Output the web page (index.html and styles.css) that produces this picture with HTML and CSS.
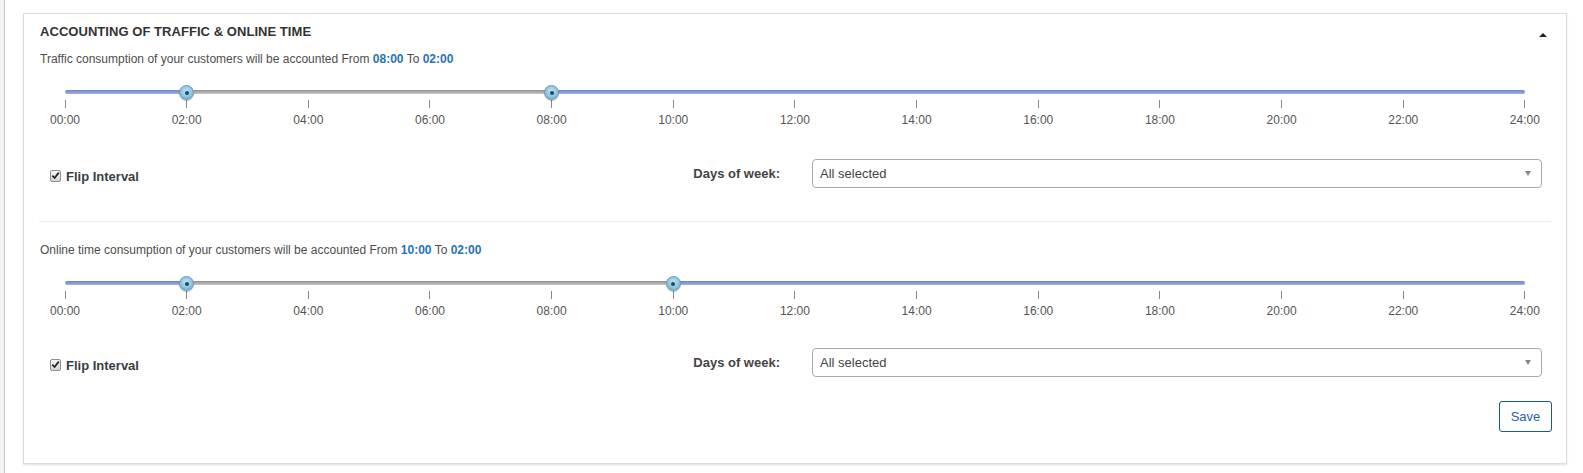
FILE: index.html
```html
<!DOCTYPE html>
<html>
<head>
<meta charset="utf-8">
<link rel="stylesheet" href="styles.css">
</head>
<body>
<div class="page">
  <div class="edge"></div>
  <div class="content">
    <div class="panel">
      <div class="panel-head">
        <h2 class="panel-title">ACCOUNTING OF TRAFFIC &amp; ONLINE TIME</h2>
        <span class="caret"></span>
      </div>

      <section class="block">
        <p class="desc">Traffic consumption of your customers will be accounted From <b>08:00</b> To <b>02:00</b></p>
        <div class="slider">
          <div class="track">
            <div class="seg on" style="flex-basis:8.3333%"></div>
            <div class="seg off" style="flex-basis:25%"></div>
            <div class="seg on" style="flex-basis:66.6667%"></div>
            <span class="handle" style="left:8.3333%"></span>
            <span class="handle" style="left:33.3333%"></span>
          </div>
          <div class="ticks">
            <div class="tick"><i></i><span>00:00</span></div>
            <div class="tick"><i></i><span>02:00</span></div>
            <div class="tick"><i></i><span>04:00</span></div>
            <div class="tick"><i></i><span>06:00</span></div>
            <div class="tick"><i></i><span>08:00</span></div>
            <div class="tick"><i></i><span>10:00</span></div>
            <div class="tick"><i></i><span>12:00</span></div>
            <div class="tick"><i></i><span>14:00</span></div>
            <div class="tick"><i></i><span>16:00</span></div>
            <div class="tick"><i></i><span>18:00</span></div>
            <div class="tick"><i></i><span>20:00</span></div>
            <div class="tick"><i></i><span>22:00</span></div>
            <div class="tick"><i></i><span>24:00</span></div>
          </div>
        </div>
        <div class="opts">
          <label class="flip"><span class="cb"><svg viewBox="0 0 10 10" width="9" height="9"><path d="M1.5 5.2 L4 7.8 L8.6 1.8" fill="none" stroke="#222" stroke-width="1.9"/></svg></span>Flip Interval</label>
          <span class="days-label">Days of week:</span>
          <div class="select"><span>All selected</span><span class="arrow"></span></div>
        </div>
      </section>

      <hr class="divider">

      <section class="block second">
        <p class="desc">Online time consumption of your customers will be accounted From <b>10:00</b> To <b>02:00</b></p>
        <div class="slider">
          <div class="track">
            <div class="seg on" style="flex-basis:8.3333%"></div>
            <div class="seg off" style="flex-basis:33.3333%"></div>
            <div class="seg on" style="flex-basis:58.3333%"></div>
            <span class="handle" style="left:8.3333%"></span>
            <span class="handle" style="left:41.6667%"></span>
          </div>
          <div class="ticks">
            <div class="tick"><i></i><span>00:00</span></div>
            <div class="tick"><i></i><span>02:00</span></div>
            <div class="tick"><i></i><span>04:00</span></div>
            <div class="tick"><i></i><span>06:00</span></div>
            <div class="tick"><i></i><span>08:00</span></div>
            <div class="tick"><i></i><span>10:00</span></div>
            <div class="tick"><i></i><span>12:00</span></div>
            <div class="tick"><i></i><span>14:00</span></div>
            <div class="tick"><i></i><span>16:00</span></div>
            <div class="tick"><i></i><span>18:00</span></div>
            <div class="tick"><i></i><span>20:00</span></div>
            <div class="tick"><i></i><span>22:00</span></div>
            <div class="tick"><i></i><span>24:00</span></div>
          </div>
        </div>
        <div class="opts">
          <label class="flip"><span class="cb"><svg viewBox="0 0 10 10" width="9" height="9"><path d="M1.5 5.2 L4 7.8 L8.6 1.8" fill="none" stroke="#222" stroke-width="1.9"/></svg></span>Flip Interval</label>
          <span class="days-label">Days of week:</span>
          <div class="select"><span>All selected</span><span class="arrow"></span></div>
        </div>
      </section>

      <div class="actions">
        <button class="btn-save" type="button">Save</button>
      </div>
    </div>
  </div>
</div>
</body>
</html>
```

FILE: styles.css
```css
* { box-sizing: border-box; }
html, body { margin: 0; padding: 0; background: #fff; }
body {
  font-family: "Liberation Sans", Arial, sans-serif;
  color: #333;
  width: 1583px;
  height: 473px;
  overflow: hidden;
}
.page { display: flex; height: 473px; }
.edge {
  width: 5px;
  flex: none;
  background: #f3f3f3;
  border-right: 1px solid #c9c9c9;
}
.content {
  flex: 1;
  padding: 13px 16px 0 18px;
}
.panel {
  border: 1px solid #dcdcdc;
  box-shadow: 0 1px 2px rgba(0, 0, 0, 0.12);
  padding: 9px 15px 31px 16px;
  background: #fff;
}
.panel-head {
  display: flex;
  justify-content: space-between;
  align-items: center;
  height: 18px;
}
.panel-title {
  margin: 0;
  font-size: 13px;
  font-weight: bold;
  line-height: 18px;
  color: #333;
  letter-spacing: 0.05px;
}
.caret {
  width: 0;
  height: 0;
  border-left: 4px solid transparent;
  border-right: 4px solid transparent;
  border-bottom: 4px solid #222;
  margin: 5px 4px 0 0;
}
.block { padding: 0; }
.desc {
  margin: 10px 0 0;
  font-size: 12px;
  line-height: 17px;
  color: #4d4d4d;
}
.desc b { color: #1f73bd; }
.slider {
  margin: 22px 26px 0 25px;
}
.track {
  position: relative;
  display: flex;
  height: 4px;
  border-radius: 2px;
}
.seg { height: 4px; }
.seg.on {
  background: linear-gradient(#6d84c8, #9fb1e4);
}
.seg.off {
  background: linear-gradient(#8f8f8f, #c9c9c9);
}
.track .seg:first-child { border-radius: 2px 0 0 2px; }
.track .seg:nth-child(3) { border-radius: 0 2px 2px 0; }
.handle {
  position: absolute;
  top: 50%;
  width: 15px;
  height: 15px;
  margin: -7px 0 0 -7.5px;
  border-radius: 50%;
  border: 1px solid #6b9ab4;
  background: radial-gradient(circle at 50% 40%, #c2e4f3 0%, #8cc4e0 55%, #5d9fc2 100%);
  box-shadow: 0 1px 1px rgba(0, 0, 0, 0.25);
}
.handle::after {
  content: "";
  position: absolute;
  left: 4.5px;
  top: 4.5px;
  width: 4px;
  height: 4px;
  border-radius: 50%;
  background: #1b4a66;
}
.ticks {
  display: flex;
  justify-content: space-between;
  margin-top: 6px;
}
.tick {
  width: 0;
  display: flex;
  flex-direction: column;
  align-items: center;
}
.tick i {
  display: block;
  width: 1px;
  height: 8px;
  background: #8a8a8a;
  flex: none;
}
.tick span {
  display: block;
  margin-top: 5px;
  font-size: 12px;
  line-height: 14px;
  color: #555;
  white-space: nowrap;
}
.opts {
  display: grid;
  grid-template-columns: 1fr auto 730px;
  column-gap: 32px;
  align-items: center;
  margin-top: 32px;
  padding: 0 9px 0 10px;
}
.second .opts { margin-top: 30px; }
.flip {
  display: flex;
  align-items: center;
  gap: 5px;
  font-size: 13px;
  font-weight: bold;
  color: #3a3d45;
  padding-top: 6px;
}
.cb {
  width: 11px;
  height: 12px;
  border: 1px solid #8e8e8e;
  border-radius: 2px;
  background: linear-gradient(#f4f4f4, #d6d6d6);
  display: flex;
  align-items: center;
  justify-content: center;
  margin-top: -2px;
}
.days-label {
  font-size: 13px;
  font-weight: bold;
  color: #444;
}
.select {
  height: 29px;
  border: 1px solid #aaa;
  border-radius: 4px;
  display: flex;
  align-items: center;
  justify-content: space-between;
  padding: 0 10px 0 7px;
  font-size: 13px;
  color: #444;
}
.arrow {
  width: 0;
  height: 0;
  border-left: 3.5px solid transparent;
  border-right: 3.5px solid transparent;
  border-top: 5px solid #888;
}
.divider {
  border: 0;
  border-top: 1px solid #ececec;
  margin: 33px 0 0 -1px;
}
.second .desc { margin-top: 20px; }
.actions {
  display: flex;
  justify-content: flex-end;
  margin-top: 24px;
  margin-right: -1px;
}
.btn-save {
  width: 53px;
  height: 31px;
  border: 1px solid #1b55a0;
  border-radius: 3px;
  background: #fff;
  color: #2a5fae;
  font-family: "Liberation Sans", Arial, sans-serif;
  font-size: 13px;
  padding: 0;
}
```
